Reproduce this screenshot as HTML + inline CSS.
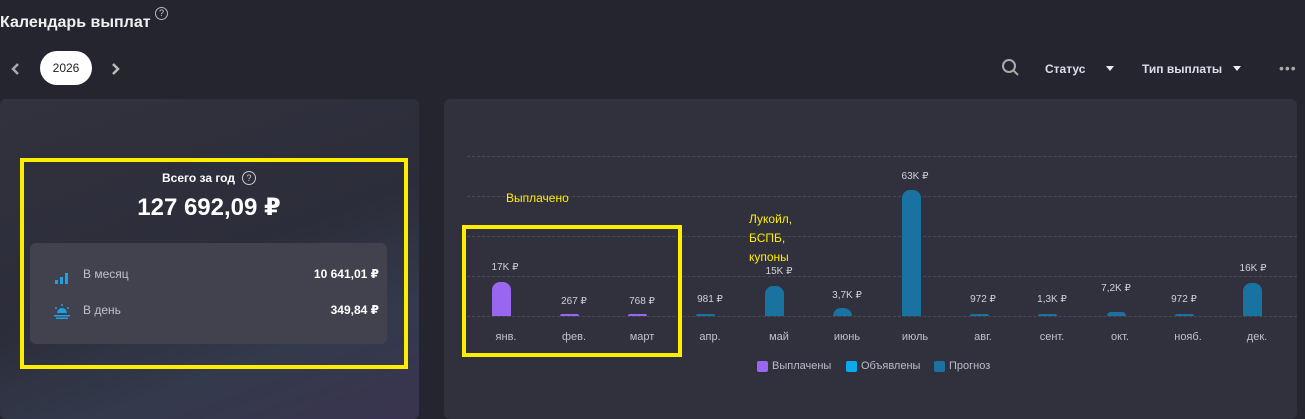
<!DOCTYPE html>
<html><head><meta charset="utf-8"><style>
*{margin:0;padding:0;box-sizing:border-box}
body{width:1305px;height:408px;background:#25252f;font-family:"Liberation Sans","DejaVu Sans",sans-serif;color:#fff;position:relative;overflow:hidden}
.a{position:absolute}
.lbl{position:absolute;font-size:10px;color:#d0d0da;transform:translateX(-50%);white-space:nowrap}
.mon{position:absolute;top:331px;font-size:11px;color:#c0c0cc;transform:translateX(-50%)}
.bar{position:absolute;width:19px;border-radius:8px 8px 0 0}
.g{position:absolute;left:467px;width:830px;border-top:1px dashed #4a4a56}
</style></head><body>
<div class="a" style="left:0;top:14px;font-size:16px;font-weight:bold;color:#f0f0f0">Календарь выплат</div>
<div class="a" style="left:155px;top:7px;width:13px;height:13px;border:1px solid #bbb;border-radius:50%;font-size:9px;text-align:center;line-height:11px;color:#ccc">?</div>
<svg class="a" style="left:10px;top:62px" width="12" height="14"><path d="M8 2L3 7L8 12" stroke="#aaa" stroke-width="2.5" fill="none"/></svg>
<div class="a" style="left:40px;top:51px;width:52px;height:34px;background:#fff;border-radius:17px;color:#222;font-size:12px;text-align:center;line-height:34px">2026</div>
<svg class="a" style="left:110px;top:62px" width="12" height="14"><path d="M3 2L8 7L3 12" stroke="#bbb" stroke-width="2.5" fill="none"/></svg>
<svg class="a" style="left:1001px;top:58px" width="20" height="20"><circle cx="8" cy="8" r="6" stroke="#aaa" stroke-width="2" fill="none"/><line x1="12.5" y1="12.5" x2="17" y2="17" stroke="#aaa" stroke-width="2"/></svg>
<div class="a" style="left:1045px;top:62px;font-size:12px;font-weight:bold;color:#dde">Статус</div>
<div class="a" style="left:1106px;top:66px;border:4px solid transparent;border-top:5px solid #eee"></div>
<div class="a" style="left:1142px;top:62px;font-size:12px;font-weight:bold;color:#dde">Тип выплаты</div>
<div class="a" style="left:1233px;top:66px;border:4px solid transparent;border-top:5px solid #eee"></div>
<div class="a" style="left:1279px;top:60px;font-size:14px;color:#aaa;letter-spacing:1px">•••</div>

<div class="a" style="left:0;top:99px;width:419px;height:320px;border-radius:6px;background:linear-gradient(160deg,#32323e 0%,#2c2d3a 50%,#333a4c 75%,#3a3450 100%)"></div>
<div class="a" style="left:30px;top:243px;width:357px;height:101px;background:#41424e;border-radius:6px"></div>
<div class="a" style="left:20px;top:158px;width:388px;height:211px;border:4px solid #ffed00"></div>
<div class="a" style="left:162px;top:171px;font-size:12px;font-weight:bold">Всего за год</div>
<div class="a" style="left:242px;top:171px;width:14px;height:14px;border:1px solid #ccc;border-radius:50%;font-size:9px;text-align:center;line-height:12px;color:#ccc">?</div>
<div class="a" style="left:0;width:418px;top:193px;text-align:center;font-size:24px;font-weight:bold">127 692,09 ₽</div>
<svg class="a" style="left:53px;top:269px" width="16" height="16"><rect x="2" y="11" width="3" height="4" fill="#1ea0e6"/><rect x="7" y="8" width="3" height="7" fill="#1ea0e6"/><rect x="12" y="4" width="3" height="11" fill="#1ea0e6"/></svg>
<div class="a" style="left:83px;top:267px;font-size:12px;color:#c0c0cc">В месяц</div>
<div class="a" style="right:926px;top:267px;font-size:12px;font-weight:bold">10 641,01 ₽</div>
<svg class="a" style="left:52px;top:303px" width="20" height="16"><path d="M5 10a5 5 0 0 1 10 0z" fill="#1ea0e6"/><rect x="2" y="12" width="16" height="1.5" fill="#1ea0e6"/><rect x="4" y="14.5" width="12" height="1.5" fill="#1ea0e6"/><circle cx="10" cy="2" r="1" fill="#1ea0e6"/><circle cx="4" cy="5" r="1" fill="#1ea0e6"/><circle cx="16" cy="5" r="1" fill="#1ea0e6"/></svg>
<div class="a" style="left:83px;top:303px;font-size:12px;color:#c0c0cc">В день</div>
<div class="a" style="right:926px;top:303px;font-size:12px;font-weight:bold">349,84 ₽</div>

<div class="a" style="left:444px;top:99px;width:853px;height:320px;border-radius:6px;background:#31313d"></div>
<div class="g" style="top:156px"></div><div class="g" style="top:196px"></div><div class="g" style="top:236px"></div><div class="g" style="top:276px"></div><div class="g" style="top:316px"></div>

<div class="bar" style="left:492px;top:282px;height:34px;background:#9966f0"></div>
<div class="bar" style="left:560px;top:314px;height:2px;background:#9966f0"></div>
<div class="bar" style="left:628px;top:314px;height:2px;background:#9966f0"></div>
<div class="bar" style="left:696px;top:314px;height:2px;background:#1a72a0"></div>
<div class="bar" style="left:765px;top:286px;height:30px;background:#1a72a0"></div>
<div class="bar" style="left:833px;top:308px;height:8px;background:#1a72a0"></div>
<div class="bar" style="left:902px;top:190px;height:126px;background:#1a72a0"></div>
<div class="bar" style="left:970px;top:314px;height:2px;background:#1a72a0"></div>
<div class="bar" style="left:1038px;top:314px;height:2px;background:#1a72a0"></div>
<div class="bar" style="left:1107px;top:312px;height:4px;background:#1a72a0"></div>
<div class="bar" style="left:1175px;top:314px;height:2px;background:#1a72a0"></div>
<div class="bar" style="left:1243px;top:283px;height:33px;background:#1a72a0"></div>

<div class="lbl" style="left:505px;top:262px">17K ₽</div>
<div class="lbl" style="left:574px;top:296px">267 ₽</div>
<div class="lbl" style="left:642px;top:296px">768 ₽</div>
<div class="lbl" style="left:710px;top:294px">981 ₽</div>
<div class="lbl" style="left:779px;top:266px">15K ₽</div>
<div class="lbl" style="left:847px;top:290px">3,7K ₽</div>
<div class="lbl" style="left:915px;top:171px">63K ₽</div>
<div class="lbl" style="left:983px;top:294px">972 ₽</div>
<div class="lbl" style="left:1052px;top:294px">1,3K ₽</div>
<div class="lbl" style="left:1116px;top:283px">7,2K ₽</div>
<div class="lbl" style="left:1184px;top:294px">972 ₽</div>
<div class="lbl" style="left:1253px;top:263px">16K ₽</div>

<div class="mon" style="left:506px">янв.</div><div class="mon" style="left:574px">фев.</div><div class="mon" style="left:642px">март</div><div class="mon" style="left:710px">апр.</div><div class="mon" style="left:779px">май</div><div class="mon" style="left:847px">июнь</div><div class="mon" style="left:915px">июль</div><div class="mon" style="left:983px">авг.</div><div class="mon" style="left:1052px">сент.</div><div class="mon" style="left:1120px">окт.</div><div class="mon" style="left:1188px">нояб.</div><div class="mon" style="left:1257px">дек.</div>

<div class="a" style="left:462px;top:225px;width:220px;height:132px;border:4px solid #ffed00"></div>
<div class="a" style="left:506px;top:191px;font-size:12px;color:#ffed00">Выплачено</div>
<div class="a" style="left:749px;top:210px;font-size:12px;line-height:19px;color:#ffed00">Лукойл,<br>БСПБ,<br>купоны</div>

<div class="a" style="left:757px;top:361px;width:11px;height:11px;border-radius:2px;background:#9966f0"></div>
<div class="a" style="left:772px;top:360px;font-size:11px;color:#bbc">Выплачены</div>
<div class="a" style="left:846px;top:361px;width:11px;height:11px;border-radius:2px;background:#0aa8ee"></div>
<div class="a" style="left:861px;top:360px;font-size:11px;color:#bbc">Объявлены</div>
<div class="a" style="left:934px;top:361px;width:11px;height:11px;border-radius:2px;background:#1a72a0"></div>
<div class="a" style="left:949px;top:360px;font-size:11px;color:#bbc">Прогноз</div>
</body></html>
